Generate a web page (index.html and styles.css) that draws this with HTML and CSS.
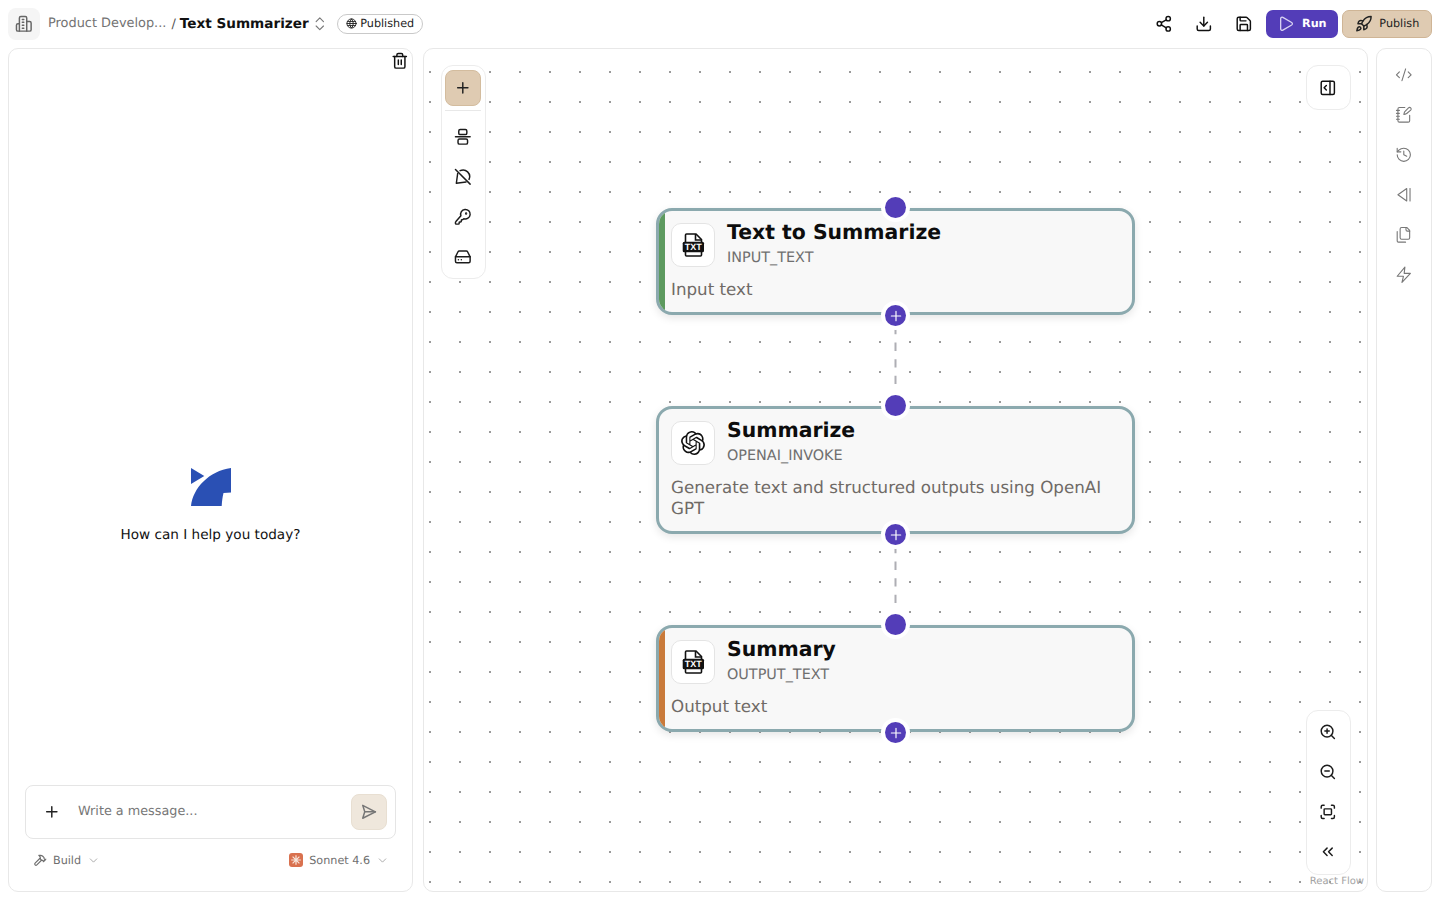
FILE: index.html
```html
<!DOCTYPE html>
<html lang="en">
<head>
<meta charset="utf-8">
<title>Text Summarizer</title>
<link rel="stylesheet" href="styles.css">
</head>
<body>
<svg class="defs" width="0" height="0" aria-hidden="true">
  <defs>
    <symbol id="txt" viewBox="0 0 24 24">
      <path d="M4.5 9V2a1 1 0 0 1 1-1H15l5.5 5.5V9" fill="none" stroke="#111" stroke-width="1.6"/>
      <path d="M14.5 1v6h6" fill="none" stroke="#111" stroke-width="1.6"/>
      <path d="M4.5 19v3a1 1 0 0 0 1 1h14a1 1 0 0 0 1-1v-3" fill="none" stroke="#111" stroke-width="1.6"/>
      <rect x="1.7" y="8.7" width="21.3" height="10.6" rx="1.5" fill="#111"/>
      <text x="12.3" y="17.3" text-anchor="middle" class="txt-label">TXT</text>
    </symbol>
  </defs>
</svg>
<header class="topbar">
  <div class="crumbs">
    <span class="home-tile">
      <svg class="ic ic-md muted" viewBox="0 0 24 24"><path d="M6 22V4a2 2 0 0 1 2-2h6a2 2 0 0 1 2 2v18Z"/><path d="M6 12H4a2 2 0 0 0-2 2v6a2 2 0 0 0 2 2h2"/><path d="M16 9h4a2 2 0 0 1 2 2v9a2 2 0 0 1-2 2h-4"/><path d="M10 6h2M10 10h2M10 14h2M10 18h2"/></svg>
    </span>
    <span class="crumb-parent">Product Develop...</span>
    <span class="crumb-sep">/</span>
    <strong class="crumb-title">Text Summarizer</strong>
    <svg class="ic ic-md chev-ud" viewBox="0 0 24 24"><path d="m7 15 5 5 5-5"/><path d="m7 9 5-5 5 5"/></svg>
    <span class="status">
      <svg class="ic ic-11" viewBox="0 0 24 24"><circle cx="12" cy="12" r="10"/><path d="M12 2a14.5 14.5 0 0 0 0 20 14.5 14.5 0 0 0 0-20"/><path d="M2 12h20"/><path d="M3.5 7.5h17M3.5 16.5h17"/></svg>
      Published
    </span>
  </div>
  <div class="actions">
    <button class="icon-btn"><svg class="ic ic-md" viewBox="0 0 24 24"><circle cx="18" cy="5" r="3"/><circle cx="6" cy="12" r="3"/><circle cx="18" cy="19" r="3"/><path d="m8.59 13.51 6.83 3.98M15.41 6.51l-6.82 3.98"/></svg></button>
    <button class="icon-btn"><svg class="ic ic-md" viewBox="0 0 24 24"><path d="M12 15V3"/><path d="M21 15v4a2 2 0 0 1-2 2H5a2 2 0 0 1-2-2v-4"/><path d="m7 10 5 5 5-5"/></svg></button>
    <button class="icon-btn"><svg class="ic ic-md" viewBox="0 0 24 24"><path d="M15.2 3a2 2 0 0 1 1.4.6l3.8 3.8a2 2 0 0 1 .6 1.4V19a2 2 0 0 1-2 2H5a2 2 0 0 1-2-2V5a2 2 0 0 1 2-2z"/><path d="M17 21v-7a1 1 0 0 0-1-1H8a1 1 0 0 0-1 1v7"/><path d="M7 3v4a1 1 0 0 0 1 1h7"/></svg></button>
    <button class="run"><svg class="ic ic-md" viewBox="0 0 24 24"><path d="M5 5a2 2 0 0 1 3-1.7l12 7a2 2 0 0 1 0 3.4l-12 7A2 2 0 0 1 5 19z"/></svg>Run</button>
    <button class="publish"><svg class="ic ic-md" viewBox="0 0 24 24"><path d="M4.5 16.5c-1.5 1.26-2 5-2 5s3.74-.5 5-2c.71-.84.7-2.13-.09-2.91a2.18 2.18 0 0 0-2.91-.09z"/><path d="m12 15-3-3a22 22 0 0 1 2-3.95A12.88 12.88 0 0 1 22 2c0 2.72-.78 7.5-6 11a22.35 22.35 0 0 1-4 2z"/><path d="M9 12H4s.55-3.03 2-4c1.62-1.08 5 0 5 0"/><path d="M12 15v5s3.03-.55 4-2c1.08-1.62 0-5 0-5"/></svg>Publish</button>
  </div>
</header>

<main class="workspace">
  <section class="chat panel">
    <button class="trash"><svg class="ic ic-md" viewBox="0 0 24 24"><path d="M3 6h18"/><path d="M19 6v14a2 2 0 0 1-2 2H7a2 2 0 0 1-2-2V6"/><path d="M8 6V4a2 2 0 0 1 2-2h4a2 2 0 0 1 2 2v2"/><path d="M10 11v6M14 11v6"/></svg></button>
    <div class="welcome">
      <svg class="logo" viewBox="0 0 40 38"><path d="M0 0 13.3 8 0 16Z"/><path d="M40 0V24.5L32.5 25C31.5 29 31 33 30.7 38H0C2 20 18 3 40 0Z"/></svg>
      <p>How can I help you today?</p>
    </div>
    <div class="composer">
      <div class="input-box">
        <svg class="ic ic-md plus-ic" viewBox="0 0 24 24"><path d="M5 12h14M12 5v14"/></svg>
        <span class="placeholder">Write a message...</span>
        <button class="send"><svg class="ic ic-md" viewBox="0 0 24 24"><path d="M3.7 3.2 21 12 3.7 20.8 6.5 12Z"/><path d="M6.5 12H21"/></svg></button>
      </div>
      <div class="composer-meta">
        <span class="meta-item">
          <svg class="ic ic-14" viewBox="0 0 24 24"><path d="m15 12-8.4 8.4a2.1 2.1 0 0 1-3-3L12 9"/><path d="M17.6 15 22 10.6"/><path d="m20.9 11.7-1.3-1.3a2 2 0 0 1-.6-1.4V7.9l-2.3-2.3A5.5 5.5 0 0 0 12.8 4L9.9 4l.9.8a5.4 5.4 0 0 1 1.9 4.2v1.5l2 2h1.2a2 2 0 0 1 1.4.6l1.1 1.1"/></svg>
          Build
          <svg class="ic ic-chev" viewBox="0 0 24 24"><path d="m6 9 6 6 6-6"/></svg>
        </span>
        <span class="meta-item">
          <span class="sonnet"><svg viewBox="0 0 14 14"><path d="M7 2.2v9.6M2.2 7h9.6M3.6 3.6l6.8 6.8M10.4 3.6l-6.8 6.8"/></svg></span>
          Sonnet 4.6
          <svg class="ic ic-chev" viewBox="0 0 24 24"><path d="m6 9 6 6 6-6"/></svg>
        </span>
      </div>
    </div>
  </section>

  <section class="canvas panel">
    <svg class="edges" width="943" height="840">
      <path d="M471.5 277V352"/>
      <path d="M471.5 496V571"/>
    </svg>

    <article class="node node-input">
      <div class="card">
        <div class="head">
          <span class="tile"><svg class="tile-ic" viewBox="0 0 24 24"><use href="#txt"/></svg></span>
          <div><h2>Text to Summarize</h2><p class="kind">INPUT_TEXT</p></div>
        </div>
        <p class="desc">Input text</p>
      </div>
      <span class="handle top"></span>
      <span class="handle bottom"><svg class="ic ic-14" viewBox="0 0 24 24"><path d="M4 12h16M12 4v16"/></svg></span>
    </article>

    <article class="node node-llm">
      <div class="card">
        <div class="head">
          <span class="tile"><svg class="tile-ic" viewBox="0 0 24 24"><path fill="#111" d="M22.2819 9.8211a5.9847 5.9847 0 0 0-.5157-4.9108 6.0462 6.0462 0 0 0-6.5098-2.9A6.0651 6.0651 0 0 0 4.9807 4.1818a5.9847 5.9847 0 0 0-3.9977 2.9 6.0462 6.0462 0 0 0 .7427 7.0966 5.98 5.98 0 0 0 .511 4.9107 6.051 6.051 0 0 0 6.5146 2.9001A5.9847 5.9847 0 0 0 13.2599 24a6.0557 6.0557 0 0 0 5.7718-4.2058 5.9894 5.9894 0 0 0 3.9977-2.9001 6.0557 6.0557 0 0 0-.7475-7.0729zm-9.022 12.6081a4.4755 4.4755 0 0 1-2.8764-1.0408l.1419-.0804 4.7783-2.7582a.7948.7948 0 0 0 .3927-.6813v-6.7369l2.02 1.1686a.071.071 0 0 1 .038.052v5.5826a4.504 4.504 0 0 1-4.4945 4.4944zm-9.6607-4.1254a4.4708 4.4708 0 0 1-.5346-3.0137l.142.0852 4.783 2.7582a.7712.7712 0 0 0 .7806 0l5.8428-3.3685v2.3324a.0804.0804 0 0 1-.0332.0615L9.74 19.9502a4.4992 4.4992 0 0 1-6.1408-1.6464zM2.3408 7.8956a4.485 4.485 0 0 1 2.3655-1.9728V11.6a.7664.7664 0 0 0 .3879.6765l5.8144 3.3543-2.0201 1.1685a.0757.0757 0 0 1-.071 0l-4.8303-2.7865A4.504 4.504 0 0 1 2.3408 7.872zm16.5963 3.8558L13.1038 8.364 15.1192 7.2a.0757.0757 0 0 1 .071 0l4.8303 2.7913a4.4944 4.4944 0 0 1-.6765 8.1042v-5.6772a.79.79 0 0 0-.407-.667zm2.0107-3.0231l-.142-.0852-4.7735-2.7818a.7759.7759 0 0 0-.7854 0L9.409 9.2297V6.8974a.0662.0662 0 0 1 .0284-.0615l4.8303-2.7866a4.4992 4.4992 0 0 1 6.6802 4.66zM8.3065 12.863l-2.02-1.1638a.0804.0804 0 0 1-.038-.0567V6.0742a4.4992 4.4992 0 0 1 7.3757-3.4537l-.142.0805L8.704 5.459a.7948.7948 0 0 0-.3927.6813zm1.0976-2.3654l2.602-1.4998 2.6069 1.4998v2.9994l-2.5974 1.4997-2.6067-1.4997Z"/></svg></span>
          <div><h2>Summarize</h2><p class="kind">OPENAI_INVOKE</p></div>
        </div>
        <p class="desc">Generate text and structured outputs using OpenAI GPT</p>
      </div>
      <span class="handle top"></span>
      <span class="handle bottom"><svg class="ic ic-14" viewBox="0 0 24 24"><path d="M4 12h16M12 4v16"/></svg></span>
    </article>

    <article class="node node-output">
      <div class="card">
        <div class="head">
          <span class="tile"><svg class="tile-ic" viewBox="0 0 24 24"><use href="#txt"/></svg></span>
          <div><h2>Summary</h2><p class="kind">OUTPUT_TEXT</p></div>
        </div>
        <p class="desc">Output text</p>
      </div>
      <span class="handle top"></span>
      <span class="handle bottom"><svg class="ic ic-14" viewBox="0 0 24 24"><path d="M4 12h16M12 4v16"/></svg></span>
    </article>

    <div class="toolbar tools-left">
      <button class="tool-add"><svg class="ic ic-md" viewBox="0 0 24 24"><path d="M5 12h14M12 5v14"/></svg></button>
      <hr class="tool-sep">
      <button class="tool"><svg class="ic ic-md" viewBox="0 0 24 24"><path d="M2 12h20"/><rect x="6.5" y="2" width="11" height="7" rx="2"/><rect x="5.5" y="15" width="13" height="7" rx="2"/></svg></button>
      <button class="tool"><svg class="ic ic-md" viewBox="0 0 24 24"><path d="M2 2l20 20"/><path d="M8.3 3.7A9 9 0 0 1 20.5 15.5"/><path d="M5 7.5 3.2 20.8 16.5 19"/></svg></button>
      <button class="tool"><svg class="ic ic-md" viewBox="0 0 24 24"><path d="M2.6 18.4A2 2 0 0 0 2 19.8V21a1 1 0 0 0 1 1h3a1 1 0 0 0 1-1v-1a1 1 0 0 1 1-1h1a1 1 0 0 0 1-1v-1a1 1 0 0 1 1-1h.2a2 2 0 0 0 1.4-.6l.8-.8a6.5 6.5 0 1 0-4-4z"/><circle cx="16.5" cy="7.5" r=".6"/></svg></button>
      <button class="tool"><svg class="ic ic-md" viewBox="0 0 24 24"><path d="M22 12H2"/><path d="M5.5 5.1 2 12v6a2 2 0 0 0 2 2h16a2 2 0 0 0 2-2v-6l-3.5-6.9A2 2 0 0 0 16.8 4H7.2a2 2 0 0 0-1.7 1.1z"/><path d="M6 16h.01M10 16h.01"/></svg></button>
    </div>

    <button class="toolbar collapse"><svg class="ic ic-md" viewBox="0 0 24 24"><rect x="3" y="3" width="18" height="18" rx="2"/><path d="M15 3v18"/><path d="m10 15-3-3 3-3"/></svg></button>

    <div class="toolbar tools-zoom">
      <button class="tool"><svg class="ic ic-md" viewBox="0 0 24 24"><circle cx="11" cy="11" r="8"/><path d="m21 21-4.3-4.3M11 8v6M8 11h6"/></svg></button>
      <button class="tool"><svg class="ic ic-md" viewBox="0 0 24 24"><circle cx="11" cy="11" r="8"/><path d="m21 21-4.3-4.3M8 11h6"/></svg></button>
      <button class="tool"><svg class="ic ic-md" viewBox="0 0 24 24"><path d="M3 7V5a2 2 0 0 1 2-2h2M17 3h2a2 2 0 0 1 2 2v2M21 17v2a2 2 0 0 1-2 2h-2M7 21H5a2 2 0 0 1-2-2v-2"/><rect x="7" y="8" width="10" height="8" rx="1"/></svg></button>
      <button class="tool"><svg class="ic ic-md" viewBox="0 0 24 24"><path d="m11 17-5-5 5-5M18 17l-5-5 5-5"/></svg></button>
    </div>
    <span class="attribution">React Flow</span>
  </section>

  <aside class="rail panel">
    <button class="tool"><svg class="ic ic-md" viewBox="0 0 24 24"><path d="m18 16 4-4-4-4M6 8l-4 4 4 4M14.5 4l-5 16"/></svg></button>
    <button class="tool"><svg class="ic ic-md" viewBox="0 0 24 24"><path d="M13.4 2H6a2 2 0 0 0-2 2v16a2 2 0 0 0 2 2h12a2 2 0 0 0 2-2v-7.4"/><path d="M2 6h4M2 10h4M2 14h4M2 18h4"/><path d="M21.4 5.6a2.1 2.1 0 1 0-3-3l-5 5a2 2 0 0 0-.5.9l-.8 3 3-.8a2 2 0 0 0 .9-.5z"/></svg></button>
    <button class="tool"><svg class="ic ic-md" viewBox="0 0 24 24"><path d="M3 12a9 9 0 1 0 9-9 9.75 9.75 0 0 0-6.74 2.74L3 8"/><path d="M3 3v5h5"/><path d="M12 7v5l4 2"/></svg></button>
    <button class="tool"><svg class="ic ic-md" viewBox="0 0 24 24"><path d="M16 3.5 4 12l12 8.5Z"/><path d="M20.5 3.5v17"/></svg></button>
    <button class="tool"><svg class="ic ic-md" viewBox="0 0 24 24"><path d="M20 7h-3a2 2 0 0 1-2-2V2"/><path d="M9 18a2 2 0 0 1-2-2V4a2 2 0 0 1 2-2h7l4 4v10a2 2 0 0 1-2 2Z"/><path d="M3 7.6v12.8A1.6 1.6 0 0 0 4.6 22h9.8"/></svg></button>
    <button class="tool"><svg class="ic ic-md" viewBox="0 0 24 24"><path d="M13.5 1.5 3 14h8.5L9.5 22.5 21 10h-8.5z"/></svg></button>
  </aside>
</main>
</body>
</html>
```

FILE: styles.css
```css
* { box-sizing: border-box; }
html, body { margin: 0; height: 100%; }
body {
  width: 1440px;
  height: 900px;
  overflow: hidden;
  background: #fff;
  color: #111;
  font-family: "DejaVu Sans", sans-serif;
  text-rendering: geometricPrecision;
  display: flex;
  flex-direction: column;
  padding: 0 8px 8px;
}
button {
  font: inherit;
  text-rendering: inherit;
  color: inherit;
  background: none;
  border: 0;
  padding: 0;
  display: flex;
  align-items: center;
  justify-content: center;
  cursor: pointer;
}
h2, p { margin: 0; }
.defs { position: absolute; }
.txt-label { font: 700 9px "Liberation Sans", sans-serif; fill: #fff; }

.ic { fill: none; stroke: currentColor; stroke-width: 2; stroke-linecap: round; stroke-linejoin: round; flex: none; display: block; }
.ic-md { width: 17.6px; height: 17.6px; }
.ic-14 { width: 14px; height: 14px; }
.ic-chev { width: 13px; height: 13px; stroke-width: 1.5; }
.ic-11 { width: 11px; height: 11px; }
.muted { color: #666; }

.topbar {
  flex: none;
  height: 48px;
  display: flex;
  align-items: center;
  justify-content: space-between;
}
.crumbs { display: flex; align-items: center; }
.home-tile {
  width: 32px; height: 32px; border-radius: 8px; background: #f5f5f5;
  display: flex; align-items: center; justify-content: center;
  margin-right: 8px;
}
.crumb-parent { font-size: 12.9px; color: #737373; margin-right: 5px; position: relative; top: -1px; }
.crumb-sep { font-size: 13px; color: #555; margin-right: 4px; }
.crumb-title { font-size: 13.6px; font-weight: 700; color: #111; }
.chev-ud { color: #777; margin: 0 9px 0 2px; stroke-width: 1.5; }
.status {
  display: flex; align-items: center; gap: 3px;
  height: 20px; padding: 0 8px 1px;
  border: 1px solid #c9c9c9; border-radius: 10px;
  font-size: 11.2px; color: #222;
}
.actions { display: flex; align-items: center; }
.icon-btn { width: 40px; height: 28px; }
.run, .publish {
  height: 28px; border-radius: 7px; font-size: 11.2px; gap: 7px; padding-bottom: 2px;
}
.run .ic, .publish .ic { position: relative; top: 1px; }
.run {
  width: 72px; margin-left: 2px; background: #533db8; color: #fff; font-weight: 700;
}
.run .ic { color: #d8d2f2; stroke-width: 1.8; }
.publish {
  width: 90px; margin-left: 4px; background: #dfcbb2; border: 1px solid #cfb596; color: #222;
}

.workspace { flex: 1; min-height: 0; display: flex; }
.panel { background: #fff; border: 1px solid #e8e8e8; border-radius: 10px; position: relative; }

.chat { width: 405px; flex: none; display: flex; flex-direction: column; }
.trash { position: absolute; top: 3px; right: 3px; width: 18px; height: 18px; }
.welcome {
  flex: 1; display: flex; flex-direction: column; align-items: center; justify-content: center;
  padding-top: 176px;
}
.logo { width: 40px; height: 38px; fill: #2a50b4; display: block; }
.welcome p { margin-top: 21px; font-size: 13.6px; color: #111; }
.composer { padding: 0 16px 22px; }
.input-box {
  height: 54px; border: 1px solid #e5e5e5; border-radius: 8px;
  display: flex; align-items: center; padding: 0 8px 0 17px;
}
.plus-ic { color: #222; }
.placeholder { flex: 1; margin-left: 17.4px; font-size: 12.8px; color: #777; position: relative; top: -1px; }
.send { width: 36px; height: 36px; border-radius: 8px; background: #efe7dc; border: 1px solid #e8dfd2; color: #777; }
.composer-meta { display: flex; justify-content: space-between; padding: 12px 7px 0 8px; }
.meta-item { display: flex; align-items: center; gap: 5px; font-size: 11.2px; color: #6f6f6f; height: 18px; }
.meta-item > .ic-14 { margin-right: 1px; }
.meta-item .ic-chev { margin-left: 1px; color: #999; }
.sonnet {
  width: 14px; height: 14px; border-radius: 3px; background: #d9714f; display: flex; margin-right: 1px;
}
.sonnet svg { width: 14px; height: 14px; fill: none; stroke: #f8e6dc; stroke-width: 1.2; }

.canvas {
  width: 945px; flex: none; margin-left: 10px; overflow: hidden;
  background-color: #fff;
  background-image: radial-gradient(circle at center, #9a9a9a 0.8px, transparent 1px);
  background-size: 30px 30px;
  background-position: -9px 8px;
}
.edges { position: absolute; left: 0; top: 0; pointer-events: none; }
.edges path { fill: none; stroke: #aeaeb4; stroke-width: 2; stroke-dasharray: 8.3 8.3; }

.node { position: absolute; left: 232px; width: 479px; }
.node-input { top: 159px; height: 107px; }
.node-llm { top: 357px; height: 128px; }
.node-output { top: 576px; height: 107px; }
.card {
  position: relative;
  overflow: hidden;
  height: 100%;
  border: 3px solid #8ba9ae;
  border-radius: 16px;
  background: #f8f8f8;
  box-shadow: 0 3px 8px rgba(0,0,0,.10);
  padding: 12px 12px 0;
}
.node-input .card::before,
.node-output .card::before {
  content: "";
  position: absolute;
  left: 0; top: 0; bottom: 0;
  width: 6px;
}
.node-input .card::before { background: #5d9a5f; }
.node-output .card::before { background: #c97a3a; }
.head { display: flex; gap: 12px; }
.tile {
  width: 44px; height: 44px; border: 1px solid #e4e4e4; border-radius: 10px; background: #fff;
  display: flex; align-items: center; justify-content: center; flex: none;
}
.tile-ic { width: 24px; height: 24px; display: block; }
h2 { font-size: 20.4px; line-height: 26px; margin-top: -4px; font-weight: 700; color: #0d0d0d; }
.kind { font-size: 14.4px; line-height: 18px; margin-top: 4px; color: #6f6f6f; }
.desc { font-size: 16.7px; line-height: 21px; margin-top: 12px; color: #6f6a66; }

.handle {
  position: absolute; left: 229px; width: 21px; height: 21px; border-radius: 50%;
  background: #533db8; box-shadow: 0 0 0 4px #fff;
  color: #fff;
  display: flex; align-items: center; justify-content: center;
}
.handle.top { top: -11px; }
.handle.bottom { bottom: -11px; }

.toolbar { position: absolute; background: #fff; border: 1px solid #ececec; border-radius: 12px; }
.tools-left {
  left: 17px; top: 16px; width: 45px; height: 214px;
  display: flex; flex-direction: column; align-items: center; padding: 4px 1px 0 0;
}
.tool-add { width: 36px; height: 36px; border-radius: 8px; background: #dfcbb2; border: 1px solid #d3bc9e; flex: none; color: #222; }
.tool-sep { width: 36px; height: 1px; border: 0; background: #e8e8e8; margin: 4px 0 0; flex: none; }
.tool { width: 40px; height: 40px; flex: none; color: #1c1c1c; }
.tools-left .tool:nth-of-type(2) { margin-top: 6px; }
.collapse { right: 16px; top: 16px; width: 45px; height: 45px; padding-right: 1px; }
.tools-zoom {
  right: 16px; bottom: 16px; width: 45px; height: 165px;
  display: flex; flex-direction: column; align-items: center; padding: 1px 1px 0 0;
}
.attribution { position: absolute; right: 3px; bottom: 4px; font-size: 10px; color: #a3a3a3; }

.rail {
  width: 56px; flex: none; margin-left: 8px;
  display: flex; flex-direction: column; align-items: center; padding-top: 6px;
}
.rail .tool { color: #777; }
.rail .ic { stroke-width: 1.5; }
```
